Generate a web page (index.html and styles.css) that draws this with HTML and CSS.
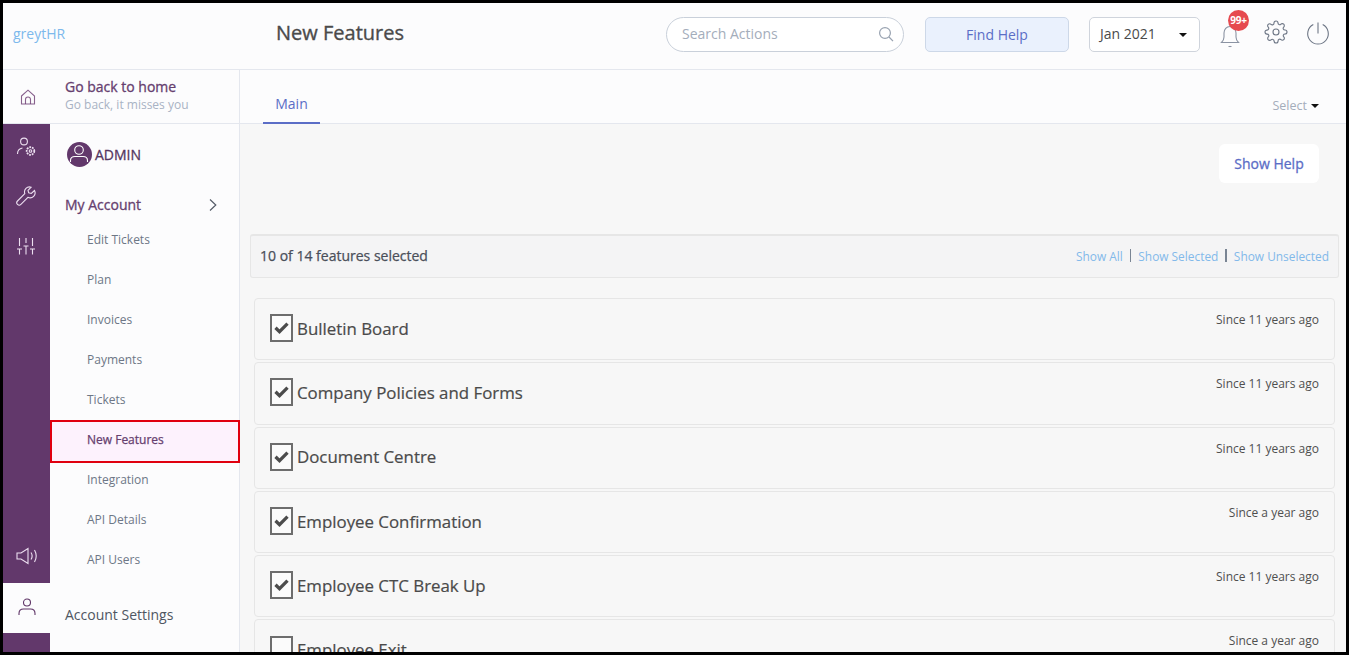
FILE: index.html
```html
<!DOCTYPE html>
<html lang="en">
<head>
<meta charset="utf-8">
<title>New Features</title>
<link rel="stylesheet" href="styles.css">
</head>
<body>
<div class="frame">
  <header class="topbar">
    <div class="brand">greytHR</div>
    <h1 class="title">New Features</h1>
    <div class="search"><span>Search Actions</span>
      <svg class="search-icon" viewBox="0 0 16 16" width="16" height="16"><circle cx="7" cy="7" r="5.4"/><path d="M11 11l4 4.2"/></svg>
    </div>
    <button class="find">Find Help</button>
    <div class="date"><span>Jan 2021</span><i class="caret"></i></div>
    <div class="bell">
      <svg viewBox="0 0 24 28" width="24" height="28"><path d="M3.500 21.500c1.500-1.500 2.500-3 2.500-5.500v-4C6 8.500 8.500 5.500 12 5.500s6 3 6 6.500v4c0 2.500 1 4 2.500 5.500z"/><path d="M10.500 25.500h3"/></svg>
      <span class="badge">99+</span>
    </div>
    <svg class="gear" viewBox="0 0 24 24" width="24" height="24"><circle cx="12" cy="12" r="3"/><path d="M19.400 15a1.650 1.650 0 0 0 .33 1.820l.06.06a2 2 0 0 1 0 2.830 2 2 0 0 1-2.830 0l-.06-.06a1.650 1.650 0 0 0-1.820-.33 1.650 1.650 0 0 0-1 1.510V21a2 2 0 0 1-2 2 2 2 0 0 1-2-2v-.09A1.650 1.650 0 0 0 9 19.400a1.650 1.650 0 0 0-1.820.33l-.06.06a2 2 0 0 1-2.830 0 2 2 0 0 1 0-2.830l.06-.06a1.650 1.650 0 0 0 .33-1.820 1.650 1.650 0 0 0-1.510-1H3a2 2 0 0 1-2-2 2 2 0 0 1 2-2h.09A1.650 1.650 0 0 0 4.600 9a1.650 1.650 0 0 0-.33-1.820l-.06-.06a2 2 0 0 1 0-2.830 2 2 0 0 1 2.830 0l.06.06a1.650 1.650 0 0 0 1.820.33H9a1.650 1.650 0 0 0 1-1.510V3a2 2 0 0 1 2-2 2 2 0 0 1 2 2v.09a1.650 1.650 0 0 0 1 1.510 1.650 1.650 0 0 0 1.820-.33l.06-.06a2 2 0 0 1 2.830 0 2 2 0 0 1 0 2.830l-.06.06a1.650 1.650 0 0 0-.33 1.820V9a1.650 1.650 0 0 0 1.510 1H21a2 2 0 0 1 2 2 2 2 0 0 1-2 2h-.09a1.650 1.650 0 0 0-1.510 1z"/></svg>
    <svg class="power" viewBox="0 0 24 24" width="24" height="24"><path d="M12 1.500v11"/><path d="M7.300 3.600a10.300 10.300 0 1 0 9.400 0"/></svg>
  </header>
  <div class="body">
    <aside class="rail">
      <div class="slot slot-home">
        <svg viewBox="0 0 16 16" width="16" height="16"><path d="M1.500 7L8 1.200 14.500 7v8h-13z"/><path d="M5.500 15v-4.500a2.500 2.500 0 0 1 5 0V15"/></svg>
      </div>
      <div class="rail-main">
        <svg class="r1" viewBox="0 0 20 20" width="20" height="20"><circle cx="8" cy="4.500" r="3.400"/><path d="M1.500 17c0-3 2-5.500 5-6"/><circle cx="14.500" cy="14" r="3.800" stroke-width="1.800" stroke-dasharray="1.800 .9"/><circle cx="14.500" cy="14" r="1.300"/></svg>
        <svg class="r2" viewBox="0 0 20 20" width="20" height="20"><path d="M18.500 4.500l-3.200 3-2.600-.6-.7-2.600 3.100-3.100a5 5 0 0 0-6.300 6.400L1.500 15a2.400 2.400 0 0 0 3.400 3.400l7-7.100a5 5 0 0 0 6.600-6.800z"/></svg>
        <svg class="r3" viewBox="0 0 20 18" width="20" height="18"><path d="M3.500 1v8M3.500 12v5.500M1 12h5M10 1v5M10 9v8.500M7.500 9h5M16.500 1v8M16.500 12v5.500M14 12h5"/></svg>
        <svg class="r4" viewBox="0 0 22 18" width="22" height="18"><path d="M1 6h4l7-4.500v15L5 12H1z"/><path d="M15 5.500c1.300 2 1.300 5 0 7M18.500 3c2 3.500 2 8.500 0 12"/></svg>
      </div>
      <div class="slot slot-user">
        <svg viewBox="0 0 18 18" width="18" height="18"><circle cx="9" cy="4.500" r="3.500"/><path d="M1 17v-1.500C1 12.500 3 11 5.500 11h7c2.500 0 4.500 1.500 4.500 4.500V17"/></svg>
      </div>
      <div class="rail-end"></div>
    </aside>
    <nav class="side">
      <div class="home-link">
        <div class="home-title">Go back to home</div>
        <div class="home-sub">Go back, it misses you</div>
      </div>
      <div class="admin">
        <span class="avatar"><svg viewBox="0 0 26 26" width="26" height="26"><circle cx="13" cy="9" r="4.300"/><path d="M4.500 21v-1.500c0-2.500 2-4 4.500-4h8c2.500 0 4.500 1.500 4.500 4V21"/></svg></span>
        <span class="admin-label">ADMIN</span>
      </div>
      <div class="section-head"><span>My Account</span>
        <svg viewBox="0 0 8 14" width="8" height="14"><path d="M1 1.500L6.800 7 1 12.500"/></svg>
      </div>
      <ul class="nav-list">
        <li class="nav-item">Edit Tickets</li>
        <li class="nav-item">Plan</li>
        <li class="nav-item">Invoices</li>
        <li class="nav-item">Payments</li>
        <li class="nav-item">Tickets</li>
        <li class="nav-item active">New Features</li>
        <li class="nav-item">Integration</li>
        <li class="nav-item">API Details</li>
        <li class="nav-item">API Users</li>
      </ul>
      <div class="settings">Account Settings</div>
    </nav>
    <main class="content">
      <div class="tabs">
        <div class="tab">Main</div>
        <div class="select">Select<i class="caret small"></i></div>
      </div>
      <div class="pane">
        <div class="help-row"><button class="show-help">Show Help</button></div>
        <div class="summary">
          <span class="count">10 of 14 features selected</span>
          <div class="filters"><a>Show All</a><b></b><a>Show Selected</a><b></b><a>Show Unselected</a></div>
        </div>
        <div class="rows">
          <div class="row"><span class="check"><svg viewBox="0 0 15 12" width="15" height="12"><path d="M1.500 5.800l4 3.800 8-7.900"/></svg></span><span class="name">Bulletin Board</span><span class="since">Since 11 years ago</span></div>
          <div class="row"><span class="check"><svg viewBox="0 0 15 12" width="15" height="12"><path d="M1.500 5.800l4 3.800 8-7.900"/></svg></span><span class="name">Company Policies and Forms</span><span class="since">Since 11 years ago</span></div>
          <div class="row"><span class="check"><svg viewBox="0 0 15 12" width="15" height="12"><path d="M1.500 5.800l4 3.800 8-7.900"/></svg></span><span class="name">Document Centre</span><span class="since">Since 11 years ago</span></div>
          <div class="row"><span class="check"><svg viewBox="0 0 15 12" width="15" height="12"><path d="M1.500 5.800l4 3.800 8-7.900"/></svg></span><span class="name">Employee Confirmation</span><span class="since">Since a year ago</span></div>
          <div class="row"><span class="check"><svg viewBox="0 0 15 12" width="15" height="12"><path d="M1.500 5.800l4 3.800 8-7.900"/></svg></span><span class="name">Employee CTC Break Up</span><span class="since">Since 11 years ago</span></div>
          <div class="row"><span class="check"></span><span class="name">Employee Exit</span><span class="since">Since a year ago</span></div>
        </div>
      </div>
    </main>
  </div>
</div>
</body>
</html>
```
FILE: styles.css
```css
* { box-sizing: border-box; }
html, body { margin: 0; height: 100%; overflow: hidden; }
body { font-family: "Open Sans", "Liberation Sans", sans-serif; color: #4a4a4a; }
ul { margin: 0; padding: 0; list-style: none; }
button { font-family: inherit; cursor: pointer; }

.frame { width: 1349px; height: 655px; border: 3px solid #000; display: flex; flex-direction: column; overflow: hidden; background: #fcfcfd; }

.topbar { height: 67px; flex: none; display: flex; align-items: center; background: #fcfcfd; border-bottom: 1px solid #e4e7ee; padding-left: 10px; }
.brand { width: 263px; font-size: 14px; color: #7db9ec; margin-top: -5px; }
.title { width: 390px; margin: -7px 0 0; font-size: 20px; font-weight: 500; color: #4a4a4a; -webkit-text-stroke: .35px #4a4a4a; }
.search { width: 238px; height: 35px; margin-top: -4px; border: 1px solid #c9d0da; border-radius: 18px; background: #fff; display: flex; align-items: center; justify-content: space-between; padding: 0 9px 2px 15px; font-size: 14px; color: #a4adbb; }
.search-icon { fill: none; stroke: #98a2b0; stroke-width: 1.200; margin-top: 1px; }
.find { width: 144px; height: 35px; margin: -4px 0 0 21px; border: 1px solid #cdd8e8; border-radius: 5px; background: #eaf1fd; color: #5b6dc6; font-size: 14px; padding: 0; }
.date { width: 111px; height: 35px; margin: -4px 0 0 20px; border: 1px solid #cfd4dc; border-radius: 5px; background: #fff; display: flex; align-items: center; justify-content: space-between; padding: 0 12px 2px 10px; font-size: 14px; color: #4a4a4a; }
.caret { display: block; width: 0; height: 0; border-left: 4px solid transparent; border-right: 4px solid transparent; border-top: 4px solid #111; }
.date .caret { margin-top: 3px; }
.caret.small { display: inline-block; margin-left: 4px; vertical-align: 2px; }
.bell { position: relative; width: 24px; height: 28px; margin: -3px 0 0 18px; }
.bell svg { display: block; fill: none; stroke: #8b93a3; stroke-width: 1.100; }
.badge { position: absolute; top: -11px; left: 10px; width: 21px; height: 21px; border-radius: 50%; background: #e64a4f; color: #fff; font-size: 10px; font-weight: 700; line-height: 21px; text-align: center; letter-spacing: -.3px; }
.gear { margin: -8px 0 0 22px; fill: none; stroke: #6d7685; stroke-width: 1.100; }
.power { margin: -7px 0 0 18px; fill: none; stroke: #6d7685; stroke-width: 1.100; }

.body { flex: 1; min-height: 0; display: flex; }
.rail { width: 47px; flex: none; display: flex; flex-direction: column; }
.slot { flex: none; display: flex; align-items: center; justify-content: center; background: #fcfcfd; }
.slot-home { height: 54px; border-bottom: 1px solid #e4e7ee; }
.slot-home svg { fill: none; stroke: #6a3a70; stroke-opacity: .8; stroke-width: 1.100; margin-left: 3px; }
.slot-user { height: 50px; }
.slot-user svg { fill: none; stroke: #5f3567; stroke-width: 1.100; margin-top: -3px; }
.rail-main { height: 459px; flex: none; background: #62386b; display: flex; flex-direction: column; align-items: center; }
.rail-main svg { fill: none; stroke: #ecdff0; stroke-width: 1.100; flex: none; margin-right: 2px; }
.rail-main .r1 { margin-top: 13px; }
.rail-main .r2 { margin-top: 29px; }
.rail-main .r3 { margin-top: 31px; }
.rail-main .r4 { margin: auto 0 18px 0; }
.rail-end { flex: 1; background: #62386b; }

.side { width: 190px; flex: none; display: flex; flex-direction: column; border-right: 1px solid #e4e7ee; background: #fcfcfd; }
.home-link { height: 54px; flex: none; padding: 7px 0 0 15px; margin-right: -1px; border-bottom: 1px solid #e4e7ee; }
.home-title { font-size: 14px; font-weight: 500; color: #66406f; line-height: 19px; -webkit-text-stroke: .3px #66406f; }
.home-sub { font-size: 12px; color: #a9b3c4; line-height: 17px; }
.admin { height: 53px; flex: none; display: flex; align-items: center; padding: 7px 0 0 17px; }
.avatar { width: 25px; height: 25px; border-radius: 50%; background: #62386b; overflow: hidden; display: block; }
.avatar svg { display: block; margin: -1px 0 0 -1px; fill: none; stroke: #fff; stroke-width: 1.100; }
.admin-label { margin-left: 3px; font-size: 14px; font-weight: 500; color: #553560; -webkit-text-stroke: .3px #553560; }
.section-head { height: 44px; flex: none; display: flex; align-items: center; justify-content: space-between; padding: 11px 22px 0 15px; font-size: 14px; font-weight: 500; color: #66406f; -webkit-text-stroke: .3px #66406f; }
.section-head svg { fill: none; stroke: #555c68; stroke-width: 1.200; }
.nav-item { height: 40px; padding-left: 37px; font-size: 12px; line-height: 38px; color: #6d7786; }
.nav-item.active { height: 43px; margin: -1px -1px -2px 0; border: 2px solid #e0000f; background: #fdf2fd; padding-left: 35px; line-height: 36px; font-weight: 500; color: #66406f; position: relative; -webkit-text-stroke: .25px #66406f; }
.settings { height: 60px; flex: none; padding: 24px 0 0 15px; font-size: 14px; color: #4f5662; }

.content { flex: 1; min-width: 0; display: flex; flex-direction: column; background: #f7f7f7; }
.tabs { height: 54px; flex: none; display: flex; align-items: flex-end; justify-content: space-between; background: #fcfcfd; border-bottom: 1px solid #e4e7ee; padding: 0 27px 0 23px; }
.tab { width: 57px; height: 39px; margin-bottom: -1px; text-align: center; font-size: 14px; line-height: 38px; color: #5b6dc6; border-bottom: 2px solid #5b6dc6; }
.select { font-size: 12.500px; color: #a4adbb; line-height: 17px; padding-bottom: 9px; }
.pane { flex: 1; min-height: 0; padding: 20px 7px 0 10px; }
.help-row { display: flex; justify-content: flex-end; padding-right: 20px; height: 90px; }
.show-help { width: 100px; height: 39px; border: 0; border-radius: 6px; background: #fff; color: #5b6dc6; font-size: 14px; font-weight: 500; padding: 0; -webkit-text-stroke: .3px #5b6dc6; }
.summary { height: 44px; display: flex; align-items: center; justify-content: space-between; padding: 0 9px 2px 9px; background: #f4f4f5; border: 1px solid #e6e6e6; border-top-width: 2px; border-radius: 3px; }
.count { font-size: 14px; font-weight: 500; color: #4a4f5a; -webkit-text-stroke: .25px #4a4f5a; }
.filters { display: flex; align-items: center; font-size: 11.900px; color: #82b9ea; }
.filters b { width: 1.500px; height: 13px; margin: 0 7px; background: #7a8594; }
.rows { margin: 20px 4px 0; display: flex; flex-direction: column; gap: 2px; }
.row { height: 62.300px; flex: none; display: flex; align-items: center; padding: 0 15px 2px; background: #f7f7f7; border: 1px solid #e6e6e6; border-radius: 4px; }
.check { width: 23px; height: 28px; flex: none; border: 2px solid #6d6d6d; background: #fbfbfb; display: flex; align-items: center; justify-content: center; }
.check svg { fill: none; stroke: #4c4c4c; stroke-width: 3.300; }
.name { margin-left: 4px; font-size: 16.850px; color: #4a4a4a; -webkit-text-stroke: .2px #4a4a4a; }
.since { margin-left: auto; align-self: flex-start; margin-top: 13px; font-size: 12px; color: #4f4f4f; line-height: 16px; }
```
